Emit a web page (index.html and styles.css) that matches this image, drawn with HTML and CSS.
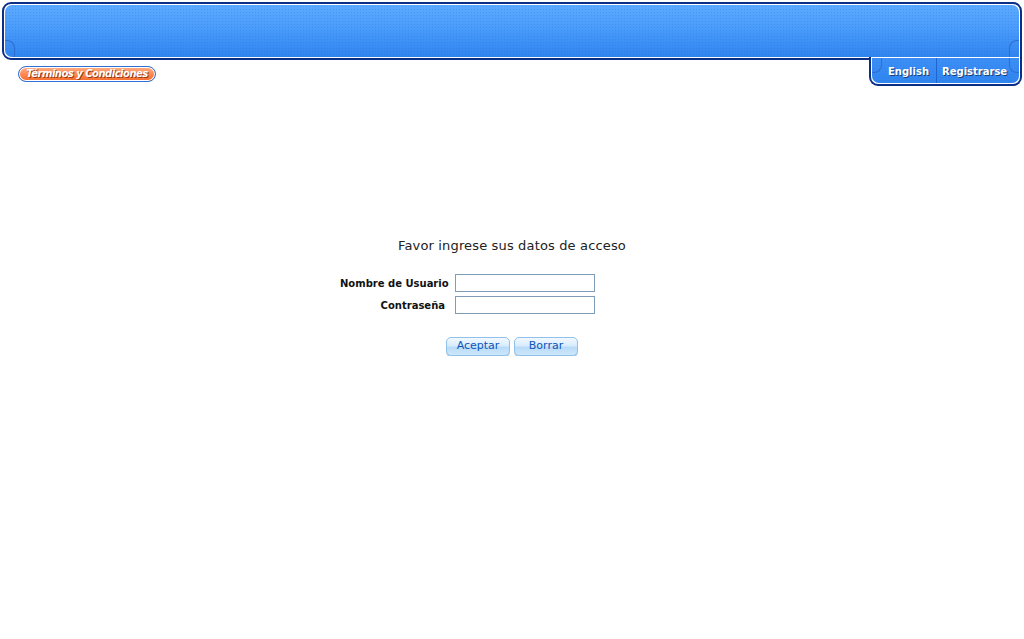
FILE: index.html
```html
<!DOCTYPE html>
<html lang="es">
<head>
<meta charset="utf-8">
<title>Acceso</title>
<link rel="stylesheet" href="styles.css">
</head>
<body>
<div class="top">
  <div class="bar">
    <div class="bar-fill">
      <span class="curl curl-left"></span>
      <span class="curl curl-right"></span>
    </div>
  </div>
  <div class="subrow">
    <a class="terms" href="#">Términos y Condiciones</a>
    <div class="tab">
      <div class="tab-fill">
        <span class="tab-curl"></span>
        <span class="tab-curl tab-curl-r"></span>
        <a class="tab-link tab-en" href="#">English</a>
        <a class="tab-link tab-reg" href="#">Registrarse</a>
      </div>
    </div>
  </div>
</div>

<main class="content">
  <h1 class="title">Favor ingrese sus datos de acceso</h1>
  <form class="login">
    <label class="lbl" for="u">Nombre de Usuario</label>
    <input class="field" id="u" type="text">
    <span></span>
    <label class="lbl lbl-pw" for="p">Contraseña</label>
    <input class="field" id="p" type="password">
    <span></span>
  </form>
  <div class="buttons">
    <button class="btn" type="button">Aceptar</button>
    <button class="btn" type="button">Borrar</button>
  </div>
</main>
</body>
</html>
```

FILE: styles.css
```css
html, body {
  margin: 0;
  padding: 0;
  background: #ffffff;
  font-family: "DejaVu Sans", Verdana, sans-serif;
}

.top {
  padding: 2px 2px 0 2px;
}

.bar {
  height: 52px;
  border: 2px solid #0b2e86;
  border-radius: 9px 9px 0 9px;
  padding: 1px;
  background: #ffffff;
}

.bar-fill {
  position: relative;
  height: 100%;
  border-radius: 7px 7px 0 7px;
  background:
    radial-gradient(circle, rgba(40, 110, 220, 0.28) 0.7px, transparent 0.9px) 0 0 / 3px 3px,
    linear-gradient(#5caaff 0%, #4a9cfb 45%, #2f84ee 100%);
  overflow: hidden;
}

.curl {
  position: absolute;
  bottom: 0;
  width: 9px;
  height: 16px;
  border-top: 1px solid #2d6fd0;
}
.curl-left {
  left: 0;
  border-right: 1px solid #2d6fd0;
  border-top-right-radius: 8px;
}
.curl-right {
  right: 0;
  border-left: 1px solid #2d6fd0;
  border-top-left-radius: 8px;
}

.subrow {
  display: flex;
  justify-content: space-between;
  align-items: flex-start;
}

.terms {
  margin: 6px 0 0 16px;
  display: block;
  width: 136px;
  height: 14px;
  border: 1px solid #2f6fd6;
  border-radius: 8px;
  box-shadow: inset 0 0 0 1px #ffffff;
  background: linear-gradient(#ffb08a 0%, #ff8a52 50%, #f46a2c 100%);
  color: #ffffff;
  font-size: 10px;
  font-weight: bold;
  font-style: italic;
  line-height: 14px;
  text-align: center;
  text-decoration: none;
  letter-spacing: -0.5px;
  text-shadow: 1px 1px 0 #9a3a12;
}

.tab {
  margin-top: -3px;
  width: 147px;
  height: 25px;
  border: 2px solid #0b2e86;
  border-top: none;
  border-radius: 0 0 9px 9px;
  padding: 1px;
  background: #ffffff;
}

.tab-fill {
  position: relative;
  height: 100%;
  display: flex;
  border-radius: 0 0 7px 7px;
  background:
    radial-gradient(circle, rgba(40, 110, 220, 0.28) 0.7px, transparent 0.9px) 0 0 / 3px 3px,
    linear-gradient(#3d8ff5, #2f84ee);
  overflow: hidden;
}

.tab-curl {
  position: absolute;
  left: 0;
  top: 0;
  width: 9px;
  height: 14px;
  border-right: 1px solid #2d6fd0;
  border-bottom: 1px solid #2d6fd0;
  border-bottom-right-radius: 8px;
}
.tab-curl-r {
  left: auto;
  right: 0;
  border-right: none;
  border-left: 1px solid #2d6fd0;
  border-bottom-right-radius: 0;
  border-bottom-left-radius: 8px;
}

.tab-link {
  display: block;
  color: #ffffff;
  font-size: 10px;
  font-weight: bold;
  text-decoration: none;
  line-height: 24px;
  padding-top: 2px;
  text-shadow: 1px 1px 0 #1b3f7a;
}
.tab-en {
  box-sizing: border-box;
  width: 65px;
  padding-left: 16px;
  border-right: 1px solid #1f63cf;
}
.tab-reg {
  flex: 1;
  padding-left: 5px;
}

.content {
  display: flex;
  flex-direction: column;
  align-items: center;
  padding-top: 152px;
}

.title {
  margin: 0;
  font-size: 13px;
  font-weight: normal;
  color: #222222;
  line-height: 16px;
  letter-spacing: 0.15px;
}

.login {
  margin-top: 20px;
  display: grid;
  grid-template-columns: 115px 140px 89px;
  row-gap: 4px;
  align-items: center;
}

.lbl {
  white-space: nowrap;
  text-align: right;
  padding-right: 7px;
  font-size: 10px;
  font-weight: bold;
  color: #111111;
}
.lbl-pw {
  padding-right: 10px;
}

.field {
  box-sizing: border-box;
  width: 140px;
  height: 18px;
  margin: 0;
  padding: 1px 2px;
  border: 1px solid #7f9db9;
  background: #ffffff;
  font-size: 11px;
}

.buttons {
  margin-top: 23px;
  display: flex;
  gap: 4px;
}

.btn {
  box-sizing: border-box;
  width: 64px;
  height: 19px;
  margin: 0;
  padding: 0 0 1px 0;
  border: 1px solid #8fc1ea;
  border-radius: 5px;
  background: linear-gradient(#f2f9ff 0%, #d8ecfd 45%, #b9dbf7 55%, #cde7fb 100%);
  box-shadow: 0 1px 0 #9cb9d6;
  color: #0a55bb;
  font-family: "DejaVu Sans", Verdana, sans-serif;
  font-size: 11px;
  font-weight: normal;
  line-height: 16px;
  cursor: pointer;
}
```
